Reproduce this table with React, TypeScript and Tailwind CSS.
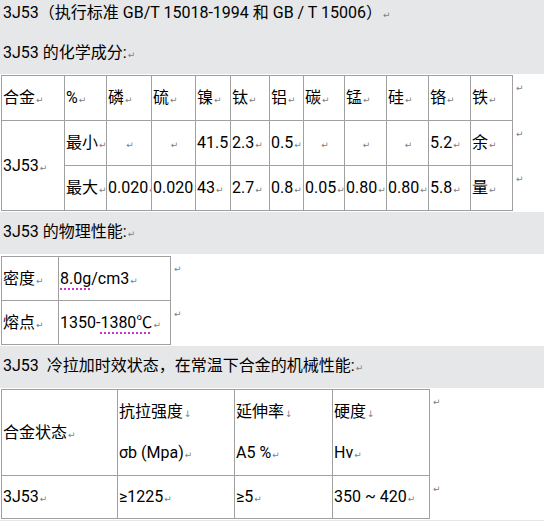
import React from "react";

const F = "font-['Roboto','Noto_Sans_CJK_SC',sans-serif]";

const M = () => (
  <span className="font-['DejaVu_Sans',sans-serif] text-[9px] text-[#808080] ml-px">↵</span>
);
const D = () => (
  <span className="font-['DejaVu_Sans',sans-serif] text-[9px] text-[#808080] ml-px">↓</span>
);

const base =
  "border-r border-b border-[#a0a0a0] pl-px overflow-hidden whitespace-nowrap align-middle text-[16px] text-black";

function Td({
  cls = "",
  rs,
  children,
}: {
  cls?: string;
  rs?: number;
  children?: React.ReactNode;
}) {
  return (
    <td rowSpan={rs} className={`${base} ${cls}`}>
      {children}
    </td>
  );
}

function EndMark({ cls = "" }: { cls?: string }) {
  return (
    <td className={`align-top pt-[9px] pl-[2px] text-[9px] leading-[9px] ${cls}`}>
      <M />
    </td>
  );
}

function V({ v }: { v: string }) {
  if (v === "")
    return (
      <Td cls="text-center">
        <M />
      </Td>
    );
  return (
    <Td>
      {v}
      <M />
    </Td>
  );
}

function Table1() {
  const head = ["%", "磷", "硫", "镍", "钛", "铝", "碳", "锰", "硅", "铬", "铁"];
  const widths = [
    "w-[42px]",
    "w-[45px]",
    "w-[44px]",
    "w-[35px]",
    "w-[39px]",
    "w-[34px]",
    "w-[41px]",
    "w-[42px]",
    "w-[42px]",
    "w-[42px]",
    "w-[42px]",
  ];
  const r2 = ["最小", "", "", "41.5", "2.3", "0.5", "", "", "", "5.2", "余"];
  const r3 = ["最大", "0.020", "0.020", "43", "2.7", "0.8", "0.05", "0.80", "0.80", "5.8", "量"];
  return (
    <table className="table-fixed border-separate border-spacing-0 w-[542px] ml-px">
      <tbody>
        <tr>
          <Td cls="border-l border-t w-[64px] h-[46px]">
            合金
            <M />
          </Td>
          {head.map((h, i) => (
            <Td key={i} cls={`border-t h-[46px] ${widths[i]}`}>
              {h}
              <M />
            </Td>
          ))}
          <EndMark cls="w-[30px]" />
        </tr>
        <tr className="h-[45px]">
          <Td rs={2} cls="border-l">
            3J53
            <M />
          </Td>
          {r2.map((v, i) => (
            <V key={i} v={v} />
          ))}
          <EndMark />
        </tr>
        <tr className="h-[45px]">
          {r3.map((v, i) => (
            <V key={i} v={v} />
          ))}
          <EndMark />
        </tr>
      </tbody>
    </table>
  );
}

function Table2() {
  const ul = "underline decoration-dotted decoration-[#c000c0] underline-offset-[5px]";
  return (
    <table className="table-fixed border-separate border-spacing-0 w-[200px] ml-px">
      <tbody>
        <tr>
          <Td cls="border-l border-t w-[58px] h-[45px]">
            密度
            <M />
          </Td>
          <Td cls="border-t w-[112px] h-[45px]">
            <span className={ul}>8.0g</span>/cm3
            <M />
          </Td>
          <EndMark cls="w-[30px]" />
        </tr>
        <tr className="h-[44px]">
          <Td cls="border-l">
            熔点
            <M />
          </Td>
          <Td>
            1350-<span className={ul}>1380℃</span>
            <M />
          </Td>
          <EndMark />
        </tr>
      </tbody>
    </table>
  );
}

function Two({ a, b }: { a: string; b: string }) {
  return (
    <div className="flex flex-col gap-[21px]">
      <div className="h-[20px] leading-[20px]">
        {a}
        <D />
      </div>
      <div className="h-[20px] leading-[20px]">
        {b}
        <M />
      </div>
    </div>
  );
}

function Table3() {
  return (
    <table className="table-fixed border-separate border-spacing-0 w-[459px] ml-px">
      <tbody>
        <tr>
          <Td cls="border-l border-t w-[117px] h-[87px]">
            合金状态
            <M />
          </Td>
          <Td cls="border-t w-[117px] h-[87px]">
            <Two a="抗拉强度" b="σb (Mpa)" />
          </Td>
          <Td cls="border-t w-[98px] h-[87px]">
            <Two a="延伸率" b="A5 %" />
          </Td>
          <Td cls="border-t w-[97px] h-[87px]">
            <Two a="硬度" b="Hv" />
          </Td>
          <EndMark cls="w-[30px]" />
        </tr>
        <tr className="h-[43px]">
          <Td cls="border-l">
            3J53
            <M />
          </Td>
          <Td>
            ≥1225
            <M />
          </Td>
          <Td>
            ≥5
            <M />
          </Td>
          <Td>
            350 ~ 420
            <M />
          </Td>
          <EndMark />
        </tr>
      </tbody>
    </table>
  );
}

export default function App() {
  return (
    <div className={`w-[544px] h-[521px] overflow-hidden bg-white ${F} text-[16px] text-black`}>
      <div className="h-[74px] bg-[#e6e7e9] pl-[3px]">
        <div className="h-[26px] leading-[26px] whitespace-nowrap">
          3J53（执行标准 GB/T 15018-1994 和 GB / T 15006）
          <M />
        </div>
        <div className="mt-[14px] h-[26px] leading-[26px]">
          3J53 的化学成分:
          <M />
        </div>
      </div>
      <div className="pt-px pb-px">
        <Table1 />
      </div>
      <div className="h-[42px] bg-[#e6e7e9] pl-[3px] flex items-center">
        <div className="leading-[26px]">
          3J53 的物理性能:
          <M />
        </div>
      </div>
      <div className="pt-[2px] pb-[1px]">
        <Table2 />
      </div>
      <div className="h-[42px] bg-[#e6e7e9] pl-[3px] flex items-center">
        <div className="leading-[26px] whitespace-pre">
          {"3J53  冷拉加时效状态，在常温下合金的机械性能:"}
          <M />
        </div>
      </div>
      <div className="pt-[1px] pb-[1px]">
        <Table3 />
      </div>
      <div className="h-[40px] bg-[#e6e7e9]" />
    </div>
  );
}
